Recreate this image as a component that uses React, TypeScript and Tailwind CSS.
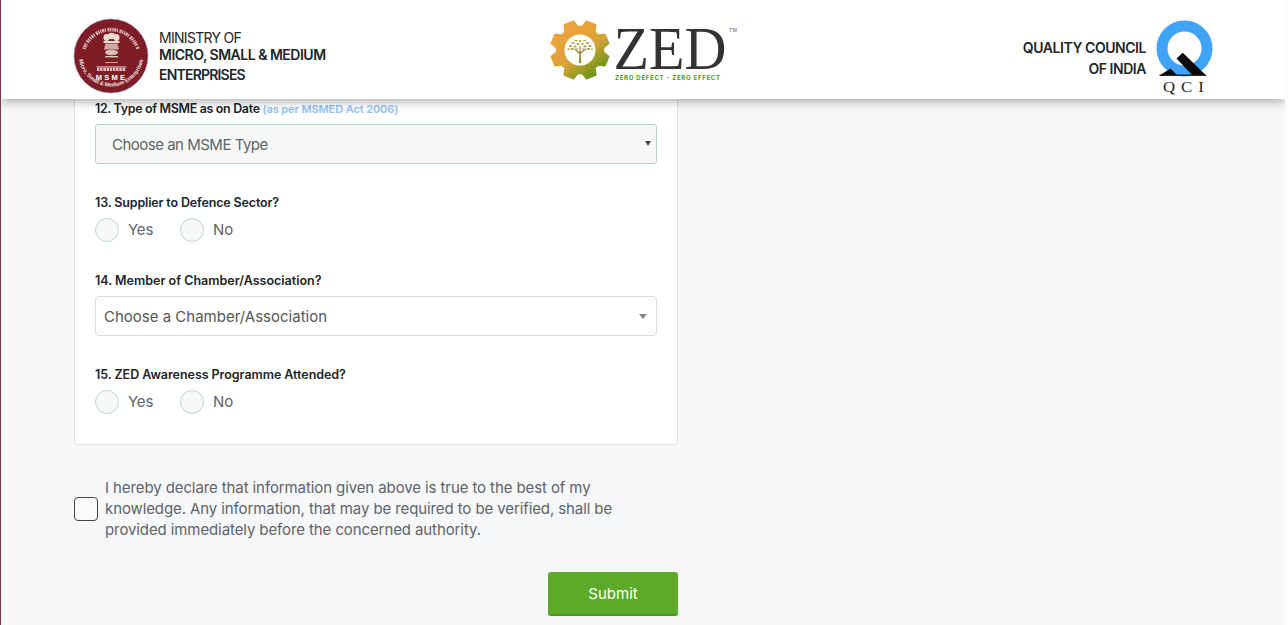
import type { ReactNode } from "react";

const MinistryEmblem = () => (
  <svg width="76" height="76" viewBox="0 0 76 76" className="shrink-0">
    <defs>
      <path id="emblem-bottom" d="M5.5 36 A32.5 32.5 0 0 0 70.5 36" />
    </defs>
    <circle cx="38" cy="38" r="37" fill="#7e1d26" stroke="#8b90b5" strokeWidth="0.6" />
    {/* hindi motto, only readable as a texture at this size */}
    <path
      d="M11 31 A28.5 28.5 0 0 1 65 31"
      fill="none"
      stroke="#ecd9d9"
      strokeWidth="3.6"
      strokeDasharray="1.4 0.6 2 0.6 1.2 1.6 2 0.6 1.4 0.8"
      opacity="0.8"
    />
    {/* lion capital */}
    <g fill="#e9dcd2">
      <ellipse cx="38.5" cy="18" rx="3.6" ry="3.2" />
      <ellipse cx="33.5" cy="19.5" rx="3" ry="3.6" />
      <ellipse cx="43.5" cy="19.5" rx="3" ry="3.6" />
      <rect x="30.5" y="23" width="16" height="2" />
      <path d="M32.5 25.5h12l1.5 6h-15z" opacity="0.75" />
      <ellipse cx="38.5" cy="34.5" rx="6.5" ry="2.8" opacity="0.85" />
      <rect x="32" y="38" width="13" height="1.4" opacity="0.9" />
      <rect x="32" y="44" width="13" height="1" opacity="0.7" />
    </g>
    <path d="M23.5 49h30" stroke="#f0e2e2" strokeWidth="1" />
    <path d="M24 51.5h29" stroke="#f0e2e2" strokeWidth="3" strokeDasharray="2.4 0.8" opacity="0.85" />
    <text x="38.5" y="61.5" textAnchor="middle" fill="#fff" fontSize="7.5" fontWeight="800" letterSpacing="2.2" fontFamily="Liberation Sans, sans-serif">
      MSME
    </text>
    <text fill="#f4e7e7" fontSize="5.4" fontWeight="700" fontFamily="Liberation Sans, sans-serif">
      <textPath href="#emblem-bottom" startOffset="50%" textAnchor="middle">
        Micro, Small &amp; Medium Enterprises
      </textPath>
    </text>
  </svg>
);

// 8 tooth gear, points worked out once at load
const gearPath = (() => {
  const pts: string[] = [];
  for (let i = 0; i < 8; i++) {
    const a = (i * Math.PI) / 4 + Math.PI / 8;
    const corner = (ang: number, r: number) =>
      `${(30 + r * Math.cos(ang)).toFixed(2)} ${(30 + r * Math.sin(ang)).toFixed(2)}`;
    pts.push(corner(a - 0.3, 23.5), corner(a - 0.17, 29.5), corner(a + 0.17, 29.5), corner(a + 0.3, 23.5));
  }
  return `M${pts.join("L")}Z`;
})();

const leaves: [number, number, number][] = [
  [30, 21, 1.6], [26, 20.5, 1.4], [34.5, 20.5, 1.4], [23, 23, 1.6], [37.5, 23, 1.6], [28, 24, 1.5], [32.5, 24, 1.5],
  [20.5, 26, 1.5], [40, 26, 1.5], [25, 26.5, 1.6], [35, 26.5, 1.6], [18.5, 29, 1.3], [42, 29, 1.3], [22, 29, 1.5],
  [38.5, 29, 1.5], [27, 29, 1.3], [33.5, 29, 1.3],
];

const ZedLogo = () => (
  <svg width="200" height="68" viewBox="0 0 200 68" className="shrink-0">
    <defs>
      <linearGradient id="gear-fill" x1="0.15" y1="0.05" x2="0.85" y2="0.95">
        <stop offset="0" stopColor="#f4a33a" />
        <stop offset="0.55" stopColor="#d8a238" />
        <stop offset="1" stopColor="#5a9313" />
      </linearGradient>
    </defs>
    <g transform="translate(0 4)">
      <path d={gearPath} fill="url(#gear-fill)" strokeLinejoin="round" stroke="url(#gear-fill)" strokeWidth="1.5" />
      <circle cx="30" cy="30" r="15.5" fill="#fff" />
      <path d="M28.9 43h2.4l-.5-9 6-5.2-.7-.6-5.3 3.9-.1-6h-1l-.3 6-5.2-3.9-.7.6 5.8 5.2z" fill="#9a8a38" />
      {leaves.map(([cx, cy, rx], i) => (
        <ellipse key={i} cx={cx} cy={cy} rx={rx} ry={rx * 0.6} fill={i % 3 === 0 ? "#d2a243" : "#a9983f"} />
      ))}
    </g>
    <text x="63.5" y="52.5" fontFamily="Liberation Serif, serif" fontSize="62" fill="#333333" textLength="113" lengthAdjust="spacingAndGlyphs">
      ZED
    </text>
    <text x="179" y="15.5" fontFamily="Liberation Sans, sans-serif" fontSize="5" fill="#555" letterSpacing="0.6">
      TM
    </text>
    <text x="65" y="63.5" fontFamily="Inter, sans-serif" fontSize="6" fontWeight="700" fill="#3f9a1c" textLength="105">
      ZERO DEFECT -  ZERO EFFECT
    </text>
  </svg>
);

const QciLogo = () => (
  <svg width="58" height="76" viewBox="0 0 58 76" className="shrink-0">
    <circle cx="28.5" cy="28.5" r="22.5" fill="none" stroke="#3fa4f8" strokeWidth="11" />
    <path d="M26.8 32.8 L50.2 55.5 H36.5 L20.5 38.5z" fill="#0a0a0a" />
    <path d="M3.5 55.5 L14.5 48.5 L21.5 55.5z" fill="#0a0a0a" />
    <rect x="3.5" y="54.5" width="46.7" height="1.3" fill="#111" />
    <text transform="translate(7 71.5) scale(1.2 1)" fontFamily="Liberation Serif, serif" fontSize="14" letterSpacing="5" fill="#222">
      QCI
    </text>
  </svg>
);

const Header = () => (
  <header className="relative z-10 flex h-[99px] shrink-0 items-center bg-white pl-[72px] pr-[71px] shadow-[0_2px_10px_rgba(0,0,0,0.35)]">
    <div className="flex w-[477px] shrink-0 items-center gap-[10px] pt-[13px]">
      <MinistryEmblem />
      <div className="mt-[4px] text-sm text-[#212529]">
        <p className="leading-[16px] tracking-[-0.7px]">MINISTRY OF</p>
        <p className="font-semibold leading-[18px] tracking-[-0.5px]">MICRO, SMALL &amp; MEDIUM</p>
        <p className="font-semibold leading-[22px] tracking-[-0.8px]">ENTERPRISES</p>
      </div>
    </div>
    <ZedLogo />
    <div className="ml-auto flex items-center gap-[10px] pt-[17px]">
      <div className="text-right text-sm font-semibold leading-[21px] tracking-[-0.45px] text-[#212529]">
        <p>QUALITY COUNCIL</p>
        <p>OF INDIA</p>
      </div>
      <QciLogo />
    </div>
  </header>
);

const RadioRow = ({ name }: { name: string }) => (
  <div className="mt-[6px] flex h-6 items-center">
    {["Yes", "No"].map((opt) => (
      <label key={opt} className="mr-[27px] flex items-center gap-[9px] text-[15px] tracking-[-0.2px] text-[#5f6368]">
        <input
          type="radio"
          name={name}
          className="h-6 w-6 appearance-none rounded-full border border-[#bcd6ce] bg-[#f7f9f8]"
        />
        {opt}
      </label>
    ))}
  </div>
);

const Label = ({ children, className = "" }: { children: ReactNode; className?: string }) => (
  <p className={`text-[12.5px] font-semibold leading-[18px] text-[#212529] ${className}`}>{children}</p>
);

export default function App() {
  return (
    <div className="flex h-[625px] flex-col overflow-hidden border-l border-r-[3px] border-l-[#7a3a44] border-r-[#fbfbfb] bg-[#f6f7f9] font-['Inter','Liberation_Sans',sans-serif]">
      <Header />
      <main className="w-[677px] pl-[73px]">
        <section className="rounded-b-[3px] border border-t-0 border-[#dfe3ea] bg-white px-5 pb-[30px] pt-[1px]">
          <Label className="tracking-[-0.35px]">
            12. Type of MSME as on Date{" "}
            <span className="text-[11px] font-semibold tracking-[-0.1px] text-[#8fc3f5]">(as per MSMED Act 2006)</span>
          </Label>
          <div className="relative mt-[6px]">
            <select className="block h-10 w-full appearance-none rounded-[3px] border border-[#b5d3ca] bg-[#f5f8f7] pl-4 pt-[2px] text-[15px] tracking-[-0.5px] text-[#5f6368]">
              <option>Choose an MSME Type</option>
            </select>
            <span className="absolute right-[6px] top-[17px] h-0 w-0 border-x-[3px] border-t-[5px] border-x-transparent border-t-[#444]" />
          </div>

          <div className="mt-[30px]">
            <Label className="tracking-[-0.15px]">13. Supplier to Defence Sector?</Label>
            <RadioRow name="defence" />
          </div>

          <div className="mt-[30px]">
            <Label>14. Member of Chamber/Association?</Label>
            <div className="mt-[6px] flex h-10 items-center justify-between rounded-[4px] border border-[#dcdcdc] bg-white pl-2 pr-[9px] text-[15px] text-[#555]">
              <span className="pt-[2px]">Choose a Chamber/Association</span>
              <span className="h-0 w-0 border-x-[4px] border-t-[5px] border-x-transparent border-t-[#888]" />
            </div>
          </div>

          <div className="mt-[30px]">
            <Label className="tracking-[-0.05px]">15. ZED Awareness Programme Attended?</Label>
            <RadioRow name="awareness" />
          </div>
        </section>

        <label className="mt-[31px] flex items-center gap-[7px]">
          <input
            type="checkbox"
            className="mt-[2px] h-6 w-6 shrink-0 appearance-none rounded-[4px] border border-[#444] bg-[#f8f9fa]"
          />
          <span className="max-w-[530px] pt-[1px] text-[15px] leading-[21px] tracking-[-0.1px] text-[#5f6368]">
            I hereby declare that information given above is true to the best of my knowledge. Any information, that
            may be required to be verified, shall be provided immediately before the concerned authority.
          </span>
        </label>

        <div className="mt-[32px] flex justify-end">
          <button className="h-11 w-[130px] rounded-[3px] border-b-2 border-b-[#4e9424] bg-[#5daa2b] pt-[2px] text-[15px] text-white">
            Submit
          </button>
        </div>
      </main>
    </div>
  );
}
